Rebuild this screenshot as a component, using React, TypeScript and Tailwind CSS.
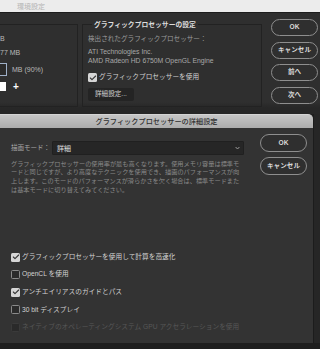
import { Check } from "lucide-react";

const FONT = "font-['Liberation_Sans','Noto_Sans_CJK_JP',sans-serif]";

function PillButton({ label, tall }: { label: string; tall?: boolean }) {
  return (
    <button
      className={`w-[47px] ${tall ? "h-[18px]" : "h-[17px]"} rounded-full border border-[#8e8e8e] bg-[#2f2f2f] flex items-center justify-center text-[6.6px] leading-none font-semibold text-[#d8d8d8]`}
    >
      {label}
    </button>
  );
}

function Box({ state }: { state: "on" | "off" | "disabled" }) {
  if (state === "on") {
    return (
      <span className="w-[9px] h-[9px] shrink-0 rounded-[1.5px] bg-[#d6d6d6] flex items-center justify-center">
        <Check className="w-[8px] h-[8px] text-[#333333]" strokeWidth={3.2} />
      </span>
    );
  }
  if (state === "disabled") {
    return <span className="w-[9px] h-[9px] shrink-0 rounded-[1.5px] bg-[#2a2a2a] border border-[#3a3a3a]" />;
  }
  return <span className="w-[9px] h-[9px] shrink-0 rounded-[1.5px] bg-[#2b2b2b] border border-[#8a8a8a]" />;
}

function CheckRow({ label, state }: { label: string; state: "on" | "off" | "disabled" }) {
  return (
    <div className="flex items-center gap-[2px] h-[9px]">
      <Box state={state} />
      <span
        className={`text-[6.7px] leading-none whitespace-nowrap ${
          state === "disabled" ? "text-[#575757]" : "text-[#d2d2d2]"
        }`}
      >
        {label}
      </span>
    </div>
  );
}

const DESCRIPTION = [
  "グラフィックプロセッサーの使用率が最も高くなります。使用メモリ容量は標準モ",
  "ードと同じですが、より高度なテクニックを使用でき、描画のパフォーマンスが向",
  "上します。このモードのパフォーマンスが滑らかさを欠く場合は、標準モードまた",
  "は基本モードに切り替えてみてください。",
];

export default function App() {
  return (
    <div className={`w-[320px] h-[349px] overflow-hidden bg-[#1f1f1f] flex flex-col ${FONT}`}>
      {/* window title strip */}
      <div className="h-[12px] shrink-0 bg-[#ececec] flex items-center pl-[17px]">
        <span className="text-[7px] leading-none text-[#b4b4b4]">環境設定</span>
      </div>

      {/* preferences window behind the sheet */}
      <div className="h-[102px] shrink-0 border-t border-[#1d1d1d] bg-[linear-gradient(to_bottom,#2f2f2f_88%,#272727_94%)] flex items-start pt-[6px]">
        <div className="mt-[5px] w-[78px] h-[83px] shrink-0 border-y border-r border-[#222222] flex flex-col text-[7px] leading-[9px] text-[#b8b8b8]">
          <div className="mt-[9px]">B</div>
          <div className="mt-[5px]">77 MB</div>
          <div className="mt-[6px] flex items-center gap-[5px] h-[13px]">
            <span className="w-[7px] h-[13px] border-y border-r border-[#9fb0c8] bg-[#2a2a2a]" />
            <span>MB (90%)</span>
          </div>
          <div className="mt-[6px] flex items-center gap-[7px] h-[9px]">
            <span className="w-[6px] h-[9px] bg-white" />
            <span className="text-[10px] font-bold text-white leading-none">+</span>
          </div>
        </div>

        <div className="relative mt-[5px] ml-[4px] w-[180px] h-[83px] shrink-0 border border-[#222222] flex flex-col pl-[5px]">
          <span className="absolute -top-[5px] left-[9px] px-[2px] bg-[#2f2f2f] text-[6.8px] leading-[9px] font-bold text-[#dcdcdc] whitespace-nowrap">
            グラフィックプロセッサーの設定
          </span>
          <div className="mt-[9px] text-[6.6px] leading-[9px] text-[#9c9c9c] whitespace-nowrap">
            検出されたグラフィックプロセッサー：
          </div>
          <div className="mt-[5px] text-[6.8px] leading-[8.5px] text-[#a8a8a8] whitespace-nowrap">
            <div>ATI Technologies Inc.</div>
            <div>AMD Radeon HD 6750M OpenGL Engine</div>
          </div>
          <div className="mt-[8px]">
            <CheckRow label="グラフィックプロセッサーを使用" state="on" />
          </div>
          <button className="mt-[6px] w-[46px] h-[13px] rounded-[2px] bg-[#242424] text-left pl-[7px] text-[6.6px] leading-none text-[#cfcfcf]">
            詳細設定...
          </button>
        </div>

        <div className="ml-[9px] flex flex-col gap-[5.5px]">
          <PillButton label="OK" />
          <PillButton label="キャンセル" />
          <PillButton label="前へ" />
          <PillButton label="次へ" />
        </div>
      </div>

      {/* advanced settings sheet */}
      <div className="h-[229px] shrink-0 flex">
        <div className="w-[313px] flex flex-col">
          <div className="h-[14px] shrink-0 rounded-tr-[5px] bg-[linear-gradient(to_bottom,#c6c6c6,#acacac)] border-t border-[#d4d4d4] flex items-center justify-center">
            <span className="text-[7.2px] leading-none font-medium text-[#303030]">
              グラフィックプロセッサーの詳細設定
            </span>
          </div>

          <div className="flex-1 bg-[#333333] flex">
            <div className="w-[244px] shrink-0 pl-[11px] pt-[13px] flex flex-col">
              <div className="h-[14px] flex items-center">
                <span className="w-[41px] text-[6.5px] leading-none text-[#a6a6a6] whitespace-nowrap">描画モード：</span>
                <div className="flex-1 h-[14px] bg-[#262626] border border-[#202020] rounded-[1px] flex items-center justify-between pl-[4px] pr-[3px]">
                  <span className="text-[7px] leading-none text-[#e0e0e0]">詳細</span>
                  <svg width="5" height="4" viewBox="0 0 5 4" className="text-[#9a9a9a]">
                    <path d="M0.6 1 L2.5 3 L4.4 1" fill="none" stroke="currentColor" strokeWidth="1" />
                  </svg>
                </div>
              </div>

              <div className="mt-[4.5px] text-[6.2px] leading-[8.8px] text-[#8a8a8a]">
                {DESCRIPTION.map((line) => (
                  <div key={line} className="whitespace-nowrap">
                    {line}
                  </div>
                ))}
              </div>

              <div className="mt-[58px] flex flex-col gap-[8.6px]">
                <CheckRow label="グラフィックプロセッサーを使用して計算を高速化" state="on" />
                <CheckRow label="OpenCL を使用" state="off" />
                <CheckRow label="アンチエイリアスのガイドとパス" state="on" />
                <CheckRow label="30 bit ディスプレイ" state="off" />
                <CheckRow label="ネイティブのオペレーティングシステム GPU アクセラレーションを使用" state="disabled" />
              </div>
            </div>

            <div className="ml-[16px] pt-[6px] flex flex-col gap-[5px]">
              <PillButton label="OK" tall />
              <PillButton label="キャンセル" tall />
            </div>
          </div>
        </div>
        <div className="flex-1 bg-[#262626] border-l border-[#1c1c1c]" />
      </div>

      <div className="flex-1 bg-[#1e1e1e]" />
    </div>
  );
}
